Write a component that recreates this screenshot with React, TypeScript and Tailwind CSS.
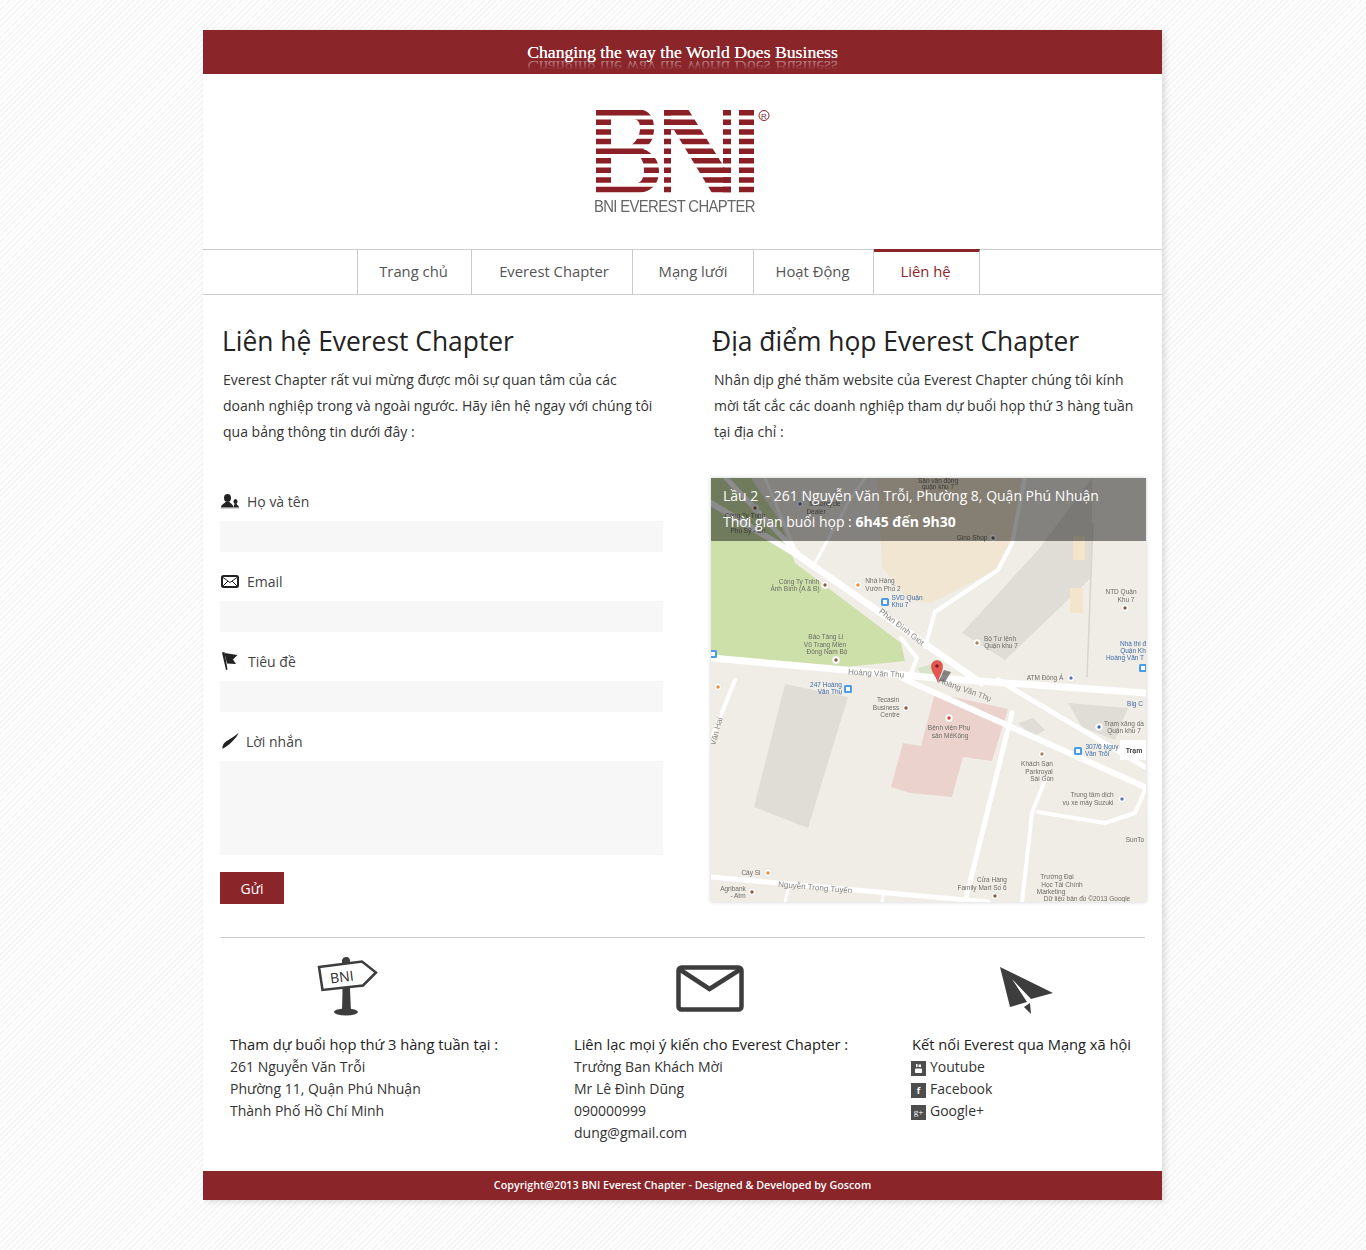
import type { ReactNode } from "react";

const navItems = [
  { label: "Trang chủ", width: "w-[114px]", inset: "pr-[2px]" },
  { label: "Everest Chapter", width: "w-[161px]", inset: "pl-[4px]" },
  { label: "Mạng lưới", width: "w-[121px]", inset: "" },
  { label: "Hoạt Động", width: "w-[120px]", inset: "pr-[2px]" },
];

// map labels, in page coordinates
const mapLabels: [string, number, number, string?][] = [
  ["Sân vận động", 938, 483],
  ["quận khu 7", 938, 489],
  ["Motorcycle", 825, 506],
  ["Dealer", 816, 514],
  ["Công Ty Tnhh", 745, 518],
  ["Phú Sỹ - Cn", 748, 533],
  ["Gino Shop", 972, 540],
  ["Công Ty Tnhh", 799, 584],
  ["Ảnh Bình (A & B)", 795, 591],
  ["Nhà Hàng", 880, 583],
  ["Vườn Phố 2", 883, 591],
  ["SVD Quận", 907, 600, "#3f6aa8"],
  ["Khu 7", 900, 607, "#3f6aa8"],
  ["NTD Quận", 1121, 594],
  ["Khu 7", 1126, 602],
  ["Bảo Tàng LI", 826, 639],
  ["Vũ Trang Miền", 825, 647],
  ["Đông Nam Bộ", 827, 654],
  ["Bộ Tư lệnh", 1000, 641],
  ["Quận khu 7", 1001, 648],
  ["Nhà thi đ", 1133, 646, "#3f6aa8"],
  ["Quận Kh", 1133, 653, "#3f6aa8"],
  ["Hoàng Văn T", 1125, 660, "#3f6aa8"],
  ["ATM Đông Á", 1045, 680],
  ["247 Hoàng", 826, 687, "#3f6aa8"],
  ["Văn Thụ", 830, 694, "#3f6aa8"],
  ["Tecasin", 888, 702],
  ["Business", 886, 710],
  ["Centre", 890, 717],
  ["Bệnh viện Phụ", 949, 730],
  ["sản MêKông", 950, 738],
  ["Big C", 1135, 706, "#3f6aa8"],
  ["Trạm xăng dầ", 1124, 726],
  ["Quận khu 7", 1124, 733],
  ["307/6 Nguy", 1102, 749, "#3f6aa8"],
  ["Văn Trỗi", 1097, 756, "#3f6aa8"],
  ["Khách Sạn", 1037, 766],
  ["Parkroyal", 1039, 774],
  ["Sài Gòn", 1042, 781],
  ["Trung tâm dịch", 1092, 797],
  ["vụ xe máy Suzuki", 1088, 805],
  ["SunTo", 1135, 842],
  ["Cây Si", 751, 875],
  ["Agribank", 733, 891],
  ["- Atm", 738, 898],
  ["Cửa Hàng", 992, 882],
  ["Family Mart Số 6", 982, 890],
  ["Trường Đại", 1057, 879],
  ["Học Tài Chính", 1062, 887],
  ["Marketing", 1051, 894],
  ["Dữ liệu bản đồ ©2013 Google", 1087, 901],
];

const roadLabels: [string, number, number, number][] = [
  ["Hoàng Văn Thụ", 876, 676, 3],
  ["Hoàng Văn Thụ", 964, 692, 20],
  ["Phan Đình Giót", 900, 629, 38],
  ["Nguyễn Trọng Tuyến", 815, 890, 5],
  ["Văn Hai", 719, 732, -75],
];

const mapDots: [number, number, string][] = [
  [755, 508, "#8b5a3c"],
  [800, 504, "#5b76b5"],
  [993, 538, "#666"],
  [825, 585, "#8b5a3c"],
  [858, 585, "#ef8f2f"],
  [1125, 608, "#8b5a3c"],
  [836, 660, "#8b5a3c"],
  [977, 643, "#a5835f"],
  [1071, 678, "#5b76b5"],
  [718, 687, "#ef8f2f"],
  [906, 708, "#8b5a3c"],
  [949, 718, "#e03a3a"],
  [1099, 727, "#3f6aa8"],
  [1042, 754, "#a5835f"],
  [1122, 799, "#5b76b5"],
  [768, 873, "#ef8f2f"],
  [752, 892, "#8b5a3c"],
  [995, 896, "#8b5a3c"],
];

const busStops: [number, number][] = [
  [885, 602],
  [713, 654],
  [848, 689],
  [1078, 751],
  [1143, 668],
];

function MapDrawing() {
  return (
    <svg viewBox="711 478 435 424" className="block h-[424px] w-[435px] blur-[0.3px]">
      <rect x="711" y="478" width="435" height="424" fill="#f0ede6" />
      <g transform="translate(711 478)">
        <polygon points="0,0 40,0 70,45 84,85 190,165 194,183 125,190 0,178" fill="#cde0a9" />
        <polygon points="167,0 310,0 301,62 284,92 221,125 197,122 171,89" fill="#f0e6d2" />
        <polygon points="251,155 327,72 381,0 381,99 294,182" fill="#e0ddd6" />
        <rect x="362" y="58" width="12" height="24" fill="#f2e5cc" />
        <rect x="359" y="110" width="13" height="25" fill="#f2e5cc" />
        <polygon points="74,206 137,219 97,350 43,329" fill="#e0ddd6" />
        <polygon points="224,215 297,231 281,283 252,279 241,319 199,315 180,309 192,265 210,268" fill="#ecd2cd" />
        <polygon points="307,245 322,240 334,252 322,259" fill="#e0ddd6" />
        <polygon points="357,225 417,230 404,262 371,249" fill="#e0ddd6" />
        <polygon points="207,190 225,185 240,200 210,198" fill="#d6e4cb" />
        <g fill="none" stroke="#fff" strokeLinecap="round" strokeLinejoin="round">
          <polyline points="0,180 226,200 435,215" strokeWidth="7" />
          <polyline points="191,200 434,309" strokeWidth="6" />
          <polyline points="287,202 434,289" strokeWidth="5" />
          <polyline points="91,80 270,205" strokeWidth="7" />
          <polyline points="0,25 91,80" strokeWidth="6" />
          <polyline points="15,0 91,80" strokeWidth="5" />
          <polyline points="54,0 84,72" strokeWidth="3" />
          <polyline points="104,85 137,25 154,0" strokeWidth="3" />
          <polyline points="314,0 301,65 287,92 224,134 214,169" strokeWidth="4" />
          <polyline points="190,160 206,180 200,195" strokeWidth="4" />
          <polyline points="301,235 254,424" strokeWidth="5" />
          <polyline points="334,302 321,335 311,424" strokeWidth="4" />
          <polyline points="327,334 394,345 424,335 434,312" strokeWidth="4" />
          <polyline points="0,399 277,424" strokeWidth="5" />
          <polyline points="24,202 0,262" strokeWidth="4" />
          <polyline points="77,412 74,424" strokeWidth="3" />
          <polyline points="172,417 171,424" strokeWidth="3" />
        </g>
        <polyline points="382,45 376,199" fill="none" stroke="#d8d5cd" strokeWidth="1.5" />
      </g>
      {mapDots.map(([x, y, color]) => (
        <g key={`${x}-${y}`}>
          <circle cx={x} cy={y} r="4" fill="#fff" stroke="#d9d5cc" strokeWidth="0.5" />
          <circle cx={x} cy={y} r="1.7" fill={color} />
        </g>
      ))}
      {busStops.map(([x, y]) => (
        <g key={`${x}-${y}`}>
          <rect x={x - 4} y={y - 4} width="8" height="8" rx="1.5" fill="#4a9be8" />
          <rect x={x - 2} y={y - 2} width="4" height="4" fill="#fff" />
        </g>
      ))}
      <g className="font-['Liberation_Sans',sans-serif] text-[6.5px]" textAnchor="middle">
        {mapLabels.map(([text, x, y, color]) => (
          <text key={`${text}-${x}`} x={x} y={y} fill={color ?? "#6b6b66"}>
            {text}
          </text>
        ))}
        {roadLabels.map(([text, x, y, angle]) => (
          <text
            key={`${text}-${x}`}
            x={x}
            y={y}
            fill="#85847f"
            fontSize="8"
            transform={`rotate(${angle} ${x} ${y})`}
          >
            {text}
          </text>
        ))}
      </g>
      <rect x="1120" y="740" width="28" height="20" fill="#fff" />
      <text x="1134" y="753" fontSize="7" fontWeight="700" fill="#444" textAnchor="middle" className="font-['Liberation_Sans',sans-serif]">
        Trạm
      </text>
      <polygon points="939,681 944,670 951,672 945,682" fill="#555" opacity="0.7" />
      <path d="M938 682 C936 676 931.500 672 931.500 666 A5.500 5.500 0 0 1 942.500 666 C942.500 672 939 676 938 682 Z" fill="#e8574f" stroke="#b03a36" strokeWidth="0.5" />
      <circle cx="937" cy="666" r="1.800" fill="#7a1f1c" />
    </svg>
  );
}

function BniLogo() {
  return (
    <svg viewBox="594 105 180 90" className="block h-[90px] w-[180px]">
      <defs>
        <clipPath id="logo-stripes">
          {[0, 1, 2, 3, 4, 5, 6, 7, 8].map((i) => (
            <rect key={i} x="590" y={110 + i * 9.6} width="170" height="5.500" />
          ))}
        </clipPath>
      </defs>
      <g clipPath="url(#logo-stripes)" fill="#8a1f25">
        <path
          fillRule="evenodd"
          d="M596 109 H636 C650 109 654 118 654 128 C654 139 650 145 643 149 C652 152 659 160 659 171 C659 185 650 193 636 193 H596 Z M611 119 H632 C638 119 640 122 640 128 C640 136 636 142 630 146 H611 Z M611 155 H634 C642 155 644 163 644 171 C644 180 640 184 632 184 H611 Z"
        />
        <rect x="664" y="109" width="7" height="84" />
        <polygon points="664,109 688,109 731,178 731,193 712,193 674,130 664,130" />
        <rect x="723" y="109" width="8" height="84" />
        <rect x="739" y="109" width="15" height="84" />
      </g>
      <circle cx="764" cy="115.500" r="5" fill="none" stroke="#8a1f25" strokeWidth="1" />
      <text x="764" y="118.500" fontSize="8" fill="#8a1f25" textAnchor="middle" className="font-['Liberation_Sans',sans-serif]">
        R
      </text>
    </svg>
  );
}

function PeopleIcon() {
  return (
    <svg viewBox="0 0 18 15" className="h-[15px] w-[18px]" fill="#222">
      <ellipse cx="6.500" cy="4" rx="3.500" ry="4" />
      <path d="M0 13.500 C0 10.500 3 10 4.500 8 H8.500 C10 10 12.500 10.500 12.500 13.500 Z" />
      <ellipse cx="14.500" cy="7.500" rx="2" ry="2.500" />
      <path d="M12.500 13.500 C13 11.500 13 11 13.500 10 H15.500 C16 11 18 11.500 18 13.500 Z" />
      <rect x="0" y="14" width="18" height="1" opacity="0.2" />
    </svg>
  );
}

function MailIcon() {
  return (
    <svg viewBox="0 0 18 13" className="h-[13px] w-[18px]" fill="none" stroke="#222">
      <rect x="1" y="1" width="16" height="11" rx="1.500" strokeWidth="2" fill="#fff" />
      <path d="M2 2.500 L9 7.500 L16 2.500 M2 11 L7 6 M16 11 L11 6" strokeWidth="1" />
    </svg>
  );
}

function FlagIcon() {
  return (
    <svg viewBox="0 0 16 18" className="h-[18px] w-[16px]" fill="#222">
      <polygon points="0,0.500 2.500,0 5.500,17.500 4,18" />
      <polygon points="2.500,1 15.500,3 11,7.500 14,12 5,11.500" />
    </svg>
  );
}

function PenIcon() {
  return (
    <svg viewBox="0 0 17 16" className="h-[16px] w-[17px]" fill="#222">
      <path d="M16.500 0 C15 4 10 9 7 11.500 C5 13.500 2 14.500 0.500 16 C0 13 1.500 10 4 8.500 C8 6 13 3 16.500 0 Z" />
    </svg>
  );
}

function SocialBadge({ children }: { children: ReactNode }) {
  return (
    <span className="mt-[5px] -ml-px flex h-[15px] w-[15px] shrink-0 items-center justify-center bg-[#4d4d4d] text-[9px] leading-none font-bold text-white">
      {children}
    </span>
  );
}

function FormLabel({ icon, text, gap }: { icon: ReactNode; text: string; gap: string }) {
  return (
    <div className={`mb-[9px] flex h-5 items-center pb-[2px] pl-px ${gap}`}>
      <span className="flex w-[18px] justify-center">{icon}</span>
      <span>{text}</span>
    </div>
  );
}

export default function App() {
  return (
    <div className="min-h-[1250px] bg-[repeating-linear-gradient(135deg,#ffffff_0,#ffffff_2px,#f6f6f6_2px,#f6f6f6_4px)] pt-[30px] pb-[50px] font-['Open_Sans',sans-serif] text-[14px] text-[#333]">
      <div className="ml-[203px] w-[959px] bg-white shadow-[3px_2px_6px_rgba(0,0,0,0.13)]">
        {/* tagline */}
        <div className="flex h-[44px] items-center justify-center bg-[#8a252a]">
          <div className="relative font-['Liberation_Serif',serif] text-[17.7px] leading-[22px] text-white [text-shadow:0_0_0.5px_#fff]">
            Changing the way the World Does Business
            <div
              aria-hidden="true"
              className="absolute top-[20px] left-0 h-[9px] overflow-hidden opacity-40 [mask-image:linear-gradient(#000,transparent)]"
            >
              <div className="-mt-[5px] -scale-y-100 whitespace-nowrap">
                Changing the way the World Does Business
              </div>
            </div>
          </div>
        </div>

        {/* logo */}
        <div className="flex h-[175px] flex-col items-center pt-[31px] pl-[3px]">
          <BniLogo />
          <div className="mt-[2px] w-[180px] origin-left scale-x-[0.875] text-left font-['Liberation_Sans',sans-serif] text-[17px] leading-[20px] tracking-[-0.75px] whitespace-nowrap text-[#666]">
            BNI EVEREST CHAPTER
          </div>
        </div>

        {/* nav */}
        <nav className="flex h-[46px] border-y border-[#ccc] pl-[154px] text-[14.8px] font-medium text-[#555]">
          <div className="flex border-l border-[#ccc]">
            {navItems.map((item) => (
              <a
                key={item.label}
                className={`flex items-center justify-center border-r border-[#ccc] pb-[2px] ${item.width} ${item.inset}`}
              >
                {item.label}
              </a>
            ))}
            <a className="-mt-px flex h-[46px] w-[106px] items-center justify-center border-t-[3px] border-r border-t-[#8a252a] border-r-[#ccc] pr-[2px] pb-[4px] text-[#8a252a]">
              Liên hệ
            </a>
          </div>
        </nav>

        {/* contact */}
        <div className="flex gap-[48px] pt-[28px] pl-[17px]">
          <div className="w-[443px]">
            <h2 className="mb-[8px] pl-[2px] text-[26.4px] leading-[36px] font-normal text-[#222]">
              Liên hệ Everest Chapter
            </h2>
            <p className="pl-[3px] leading-[26px]">
              Everest Chapter rất vui mừng được môi sự quan tâm của các
              <br />
              doanh nghiệp trong và ngoài ngước. Hãy iên hệ ngay với chúng tôi
              <br />
              qua bảng thông tin dưới đây :
            </p>
            <form className="mt-[47px] text-[#444]">
              <FormLabel icon={<PeopleIcon />} text="Họ và tên" gap="gap-[8px]" />
              <div className="mb-[20px] h-[31px] bg-[#f7f7f7]" />
              <FormLabel icon={<MailIcon />} text="Email" gap="gap-[8px]" />
              <div className="mb-[20px] h-[31px] bg-[#f7f7f7]" />
              <FormLabel icon={<FlagIcon />} text="Tiêu đề" gap="gap-[9px]" />
              <div className="mb-[20px] h-[31px] bg-[#f7f7f7]" />
              <FormLabel icon={<PenIcon />} text="Lời nhắn" gap="gap-[7px]" />
              <div className="h-[94px] bg-[#f7f7f7]" />
              <button
                type="button"
                className="mt-[17px] block h-[32px] w-[64px] bg-[#8a252a] text-white"
              >
                Gửi
              </button>
            </form>
          </div>

          <div className="w-[435px]">
            <h2 className="mb-[8px] pl-px text-[26.4px] leading-[36px] font-normal text-[#222]">
              Địa điểm họp Everest Chapter
            </h2>
            <p className="pl-[3px] leading-[26px]">
              Nhân dịp ghé thăm website của Everest Chapter chúng tôi kính
              <br />
              mời tất cắc các doanh nghiệp tham dự buổi họp thứ 3 hàng tuần
              <br />
              tại địa chỉ :
            </p>
            <div className="relative mt-[33px] h-[424px] shadow-[0_0_4px_rgba(0,0,0,0.2)]">
              <MapDrawing />
              <div className="absolute inset-x-0 top-0 h-[63px] bg-black/45 pt-[5px] pl-[12px] text-[14px] leading-[26px] text-white">
                <div>Lầu 2&nbsp; - 261 Nguyễn Văn Trỗi, Phường 8, Quận Phú Nhuận</div>
                <div>
                  Thời gian buổi họp : <b>6h45 đến 9h30</b>
                </div>
              </div>
            </div>
          </div>
        </div>

        {/* info columns */}
        <div className="mx-[17px] mt-[33px] flex border-t border-[#ccc] pt-[17px] pb-[27px] pl-[10px] leading-[22px]">
          <div className="w-[344px]">
            <svg viewBox="315 955 65 62" className="ml-[85px] h-[62px] w-[65px]">
              <path d="M342 1012 L343 966 H349 L351 1012 Z" fill="#3d3d3d" />
              <path d="M342 966 V960 A4.500 4.500 0 0 1 347 957 A4 4 0 0 1 350 961 V966 Z" fill="#3d3d3d" />
              <ellipse cx="346" cy="1012" rx="12" ry="3.500" fill="#3d3d3d" />
              <polygon points="319,967 362,961.500 376,972.500 363,985.500 322.500,990" fill="#fff" stroke="#3d3d3d" strokeWidth="2.500" />
              <text x="342" y="982" fontSize="14" fill="#2b2b2b" textAnchor="middle" transform="rotate(-7 342 978)">
                BNI
              </text>
            </svg>
            <h3 className="mt-[15px] text-[14.7px] leading-[24px] font-medium text-[#222]">
              Tham dự buổi họp thứ 3 hàng tuần tại :
            </h3>
            <div>261 Nguyễn Văn Trỗi</div>
            <div>Phường 11, Quận Phú Nhuận</div>
            <div>Thành Phố Hồ Chí Minh</div>
          </div>

          <div className="w-[338px]">
            <svg viewBox="675 955 70 62" className="ml-[101px] h-[62px] w-[70px]" fill="none" stroke="#3d3d3d">
              <rect x="678.500" y="967.500" width="63" height="42" rx="3" strokeWidth="4.500" />
              <path d="M679 969 L709.500 989 L741 969" strokeWidth="4.500" />
            </svg>
            <h3 className="mt-[15px] text-[14.7px] leading-[24px] font-medium text-[#222]">
              Liên lạc mọi ý kiến cho Everest Chapter :
            </h3>
            <div>Trưởng Ban Khách Mời</div>
            <div>Mr Lê Đình Dũng</div>
            <div>090000999</div>
            <div>dung@gmail.com</div>
          </div>

          <div>
            <svg viewBox="998 955 58 62" className="ml-[86px] h-[62px] w-[58px]" fill="#3d3d3d">
              <polygon points="1000,967 1053,993 1031,999 1012,979 1027,1002 1010,1007" />
              <polygon points="1024,1007 1030,1003 1031,1014" />
            </svg>
            <h3 className="mt-[15px] text-[14.7px] leading-[24px] font-medium text-[#222]">
              Kết nối Everest qua Mạng xã hội
            </h3>
            <div className="flex gap-[4px]">
              <SocialBadge>
                <svg viewBox="0 0 15 15" className="h-[15px] w-[15px]" fill="#fff">
                  <rect x="5" y="3" width="1.500" height="3" />
                  <rect x="7.500" y="3.500" width="2.500" height="2.500" />
                  <rect x="4" y="7.500" width="7" height="4.500" rx="0.800" />
                </svg>
              </SocialBadge>
              <span>Youtube</span>
            </div>
            <div className="flex gap-[4px]">
              <SocialBadge>f</SocialBadge>
              <span>Facebook</span>
            </div>
            <div className="flex gap-[4px]">
              <SocialBadge>
                <span className="font-['Liberation_Serif',serif] font-normal">g+</span>
              </SocialBadge>
              <span>Google+</span>
            </div>
          </div>
        </div>

        <div className="flex h-[29px] items-center justify-center bg-[#8a252a] text-[10.75px] font-semibold text-white">
          Copyright@2013 BNI Everest Chapter - Designed &amp; Developed by Goscom
        </div>
      </div>
    </div>
  );
}
